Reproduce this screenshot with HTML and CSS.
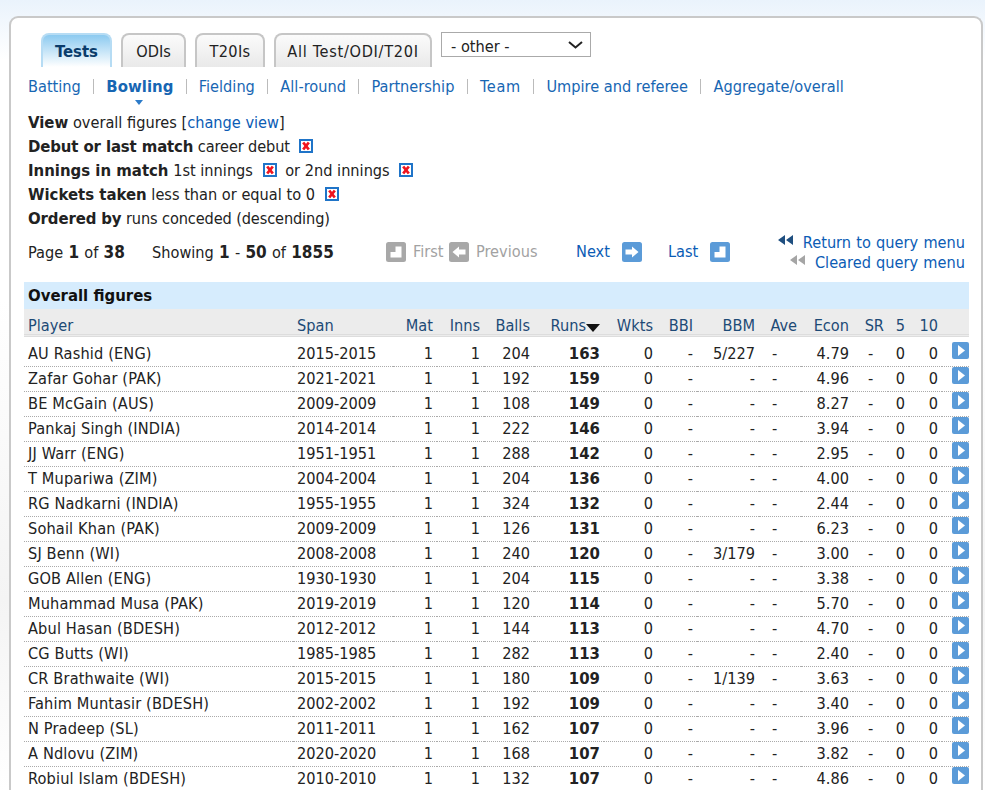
FILE: index.html
```html
<!DOCTYPE html>
<html lang="en">
<head>
<meta charset="utf-8">
<title>Overall figures</title>
<link rel="stylesheet" href="styles.css">
</head>
<body>
<svg class="defs" width="0" height="0" aria-hidden="true">
  <symbol id="i-x" viewBox="0 0 14 14"><rect x="1" y="1" width="12" height="12" fill="#fff" stroke="#1f74c8" stroke-width="2"/><path d="M4.200 3.500l5.600 7M9.800 3.500l-5.600 7" stroke="#f0141e" stroke-width="2.800" fill="none"/></symbol>
  <symbol id="i-first" viewBox="0 0 20 20"><rect width="20" height="20" rx="2.500"/><path d="M4.500 10H9.500V4.500H15.500V15.500H4.500z" fill="#fff"/></symbol>
  <symbol id="i-prev" viewBox="0 0 20 20"><rect width="20" height="20" rx="2.500"/><path d="M3.500 10L10 4.500V7.500h6.500v5H10v3z" fill="#fff"/></symbol>
  <symbol id="i-next" viewBox="0 0 20 20"><rect width="20" height="20" rx="2.500"/><path d="M16.500 10L10 4.500V7.500H3.500v5H10v3z" fill="#fff"/></symbol>
  <symbol id="i-play" viewBox="0 0 17 17"><rect width="17" height="17" rx="2"/><path d="M6 3L13 8.500 6 14z" fill="#fff"/></symbol>
  <symbol id="i-back" viewBox="0 0 15 10"><path d="M7 0v10L0 5zM15 0v10L8 5z"/></symbol>
</svg>
<div class="panel">
  <div class="tabs">
    <a class="tab tab-active">Tests</a>
    <a class="tab tab-odi">ODIs</a>
    <a class="tab tab-t20">T20Is</a>
    <a class="tab tab-all">All Test/ODI/T20I</a>
    <div class="select">
      <span>- other -</span>
      <svg class="chevron" width="15" height="8" viewBox="0 0 15 8"><path d="M1 1l6.500 5.500L14 1" fill="none" stroke="#222" stroke-width="2"/></svg>
    </div>
  </div>
  <nav class="subnav">
    <a>Batting</a><i></i>
    <a class="current">Bowling</a><i></i>
    <a>Fielding</a><i></i>
    <a>All-round</a><i></i>
    <a>Partnership</a><i></i>
    <a class="wide">Team</a><i></i>
    <a>Umpire and referee</a><i></i>
    <a>Aggregate/overall</a>
  </nav>
  <div class="filters">
    <div><b>View</b> overall figures [<a>change view</a>]</div>
    <div class="tight"><b>Debut or last match</b> career debut <svg class="x"><use href="#i-x"/></svg></div>
    <div><b>Innings in match</b> 1st innings <svg class="x"><use href="#i-x"/></svg> or 2nd innings <svg class="x"><use href="#i-x"/></svg></div>
    <div><b>Wickets taken</b> less than or equal to 0 <svg class="x"><use href="#i-x"/></svg></div>
    <div class="tight"><b>Ordered by</b> runs conceded (descending)</div>
  </div>
  <div class="pager">
    <span class="page-of">Page <b>1</b> of <b>38</b></span>
    <span class="showing">Showing <b>1</b> - <b>50</b> of <b>1855</b></span>
    <span class="nav off first"><svg class="btn"><use href="#i-first"/></svg>First</span>
    <span class="nav off prev"><svg class="btn"><use href="#i-prev"/></svg>Previous</span>
    <a class="nav next">Next<svg class="btn"><use href="#i-next"/></svg></a>
    <a class="nav last">Last<svg class="btn"><use href="#i-first"/></svg></a>
    <div class="query">
      <a><svg class="back dark"><use href="#i-back"/></svg>Return to query menu</a>
      <a><svg class="back pale"><use href="#i-back"/></svg>Cleared query menu</a>
    </div>
  </div>
  <div class="caption">Overall figures</div>
  <table class="stats">
    <colgroup>
      <col class="c-player"><col class="c-span"><col class="c-mat"><col class="c-inns"><col class="c-balls"><col class="c-runs"><col class="c-wkts"><col class="c-bbi"><col class="c-bbm"><col class="c-ave"><col class="c-econ"><col class="c-sr"><col class="c-five"><col class="c-ten"><col class="c-go">
    </colgroup>
    <thead>
      <tr><th class="l">Player</th><th class="l">Span</th><th>Mat</th><th>Inns</th><th>Balls</th><th>Runs<span class="sort"></span></th><th>Wkts</th><th>BBI</th><th>BBM</th><th>Ave</th><th>Econ</th><th>SR</th><th>5</th><th>10</th><th></th></tr>
    </thead>
    <tbody>
      <tr><td class="l">AU Rashid (ENG)</td><td class="l">2015-2015</td><td>1</td><td>1</td><td>204</td><td class="b">163</td><td>0</td><td>-</td><td>5/227</td><td class="d">-</td><td>4.79</td><td class="d">-</td><td>0</td><td>0</td><td class="go"><svg class="play"><use href="#i-play"/></svg></td></tr>
      <tr><td class="l">Zafar Gohar (PAK)</td><td class="l">2021-2021</td><td>1</td><td>1</td><td>192</td><td class="b">159</td><td>0</td><td>-</td><td>-</td><td class="d">-</td><td>4.96</td><td class="d">-</td><td>0</td><td>0</td><td class="go"><svg class="play"><use href="#i-play"/></svg></td></tr>
      <tr><td class="l">BE McGain (AUS)</td><td class="l">2009-2009</td><td>1</td><td>1</td><td>108</td><td class="b">149</td><td>0</td><td>-</td><td>-</td><td class="d">-</td><td>8.27</td><td class="d">-</td><td>0</td><td>0</td><td class="go"><svg class="play"><use href="#i-play"/></svg></td></tr>
      <tr><td class="l">Pankaj Singh (INDIA)</td><td class="l">2014-2014</td><td>1</td><td>1</td><td>222</td><td class="b">146</td><td>0</td><td>-</td><td>-</td><td class="d">-</td><td>3.94</td><td class="d">-</td><td>0</td><td>0</td><td class="go"><svg class="play"><use href="#i-play"/></svg></td></tr>
      <tr><td class="l">JJ Warr (ENG)</td><td class="l">1951-1951</td><td>1</td><td>1</td><td>288</td><td class="b">142</td><td>0</td><td>-</td><td>-</td><td class="d">-</td><td>2.95</td><td class="d">-</td><td>0</td><td>0</td><td class="go"><svg class="play"><use href="#i-play"/></svg></td></tr>
      <tr><td class="l">T Mupariwa (ZIM)</td><td class="l">2004-2004</td><td>1</td><td>1</td><td>204</td><td class="b">136</td><td>0</td><td>-</td><td>-</td><td class="d">-</td><td>4.00</td><td class="d">-</td><td>0</td><td>0</td><td class="go"><svg class="play"><use href="#i-play"/></svg></td></tr>
      <tr><td class="l">RG Nadkarni (INDIA)</td><td class="l">1955-1955</td><td>1</td><td>1</td><td>324</td><td class="b">132</td><td>0</td><td>-</td><td>-</td><td class="d">-</td><td>2.44</td><td class="d">-</td><td>0</td><td>0</td><td class="go"><svg class="play"><use href="#i-play"/></svg></td></tr>
      <tr><td class="l">Sohail Khan (PAK)</td><td class="l">2009-2009</td><td>1</td><td>1</td><td>126</td><td class="b">131</td><td>0</td><td>-</td><td>-</td><td class="d">-</td><td>6.23</td><td class="d">-</td><td>0</td><td>0</td><td class="go"><svg class="play"><use href="#i-play"/></svg></td></tr>
      <tr><td class="l">SJ Benn (WI)</td><td class="l">2008-2008</td><td>1</td><td>1</td><td>240</td><td class="b">120</td><td>0</td><td>-</td><td>3/179</td><td class="d">-</td><td>3.00</td><td class="d">-</td><td>0</td><td>0</td><td class="go"><svg class="play"><use href="#i-play"/></svg></td></tr>
      <tr><td class="l">GOB Allen (ENG)</td><td class="l">1930-1930</td><td>1</td><td>1</td><td>204</td><td class="b">115</td><td>0</td><td>-</td><td>-</td><td class="d">-</td><td>3.38</td><td class="d">-</td><td>0</td><td>0</td><td class="go"><svg class="play"><use href="#i-play"/></svg></td></tr>
      <tr><td class="l">Muhammad Musa (PAK)</td><td class="l">2019-2019</td><td>1</td><td>1</td><td>120</td><td class="b">114</td><td>0</td><td>-</td><td>-</td><td class="d">-</td><td>5.70</td><td class="d">-</td><td>0</td><td>0</td><td class="go"><svg class="play"><use href="#i-play"/></svg></td></tr>
      <tr><td class="l">Abul Hasan (BDESH)</td><td class="l">2012-2012</td><td>1</td><td>1</td><td>144</td><td class="b">113</td><td>0</td><td>-</td><td>-</td><td class="d">-</td><td>4.70</td><td class="d">-</td><td>0</td><td>0</td><td class="go"><svg class="play"><use href="#i-play"/></svg></td></tr>
      <tr><td class="l">CG Butts (WI)</td><td class="l">1985-1985</td><td>1</td><td>1</td><td>282</td><td class="b">113</td><td>0</td><td>-</td><td>-</td><td class="d">-</td><td>2.40</td><td class="d">-</td><td>0</td><td>0</td><td class="go"><svg class="play"><use href="#i-play"/></svg></td></tr>
      <tr><td class="l">CR Brathwaite (WI)</td><td class="l">2015-2015</td><td>1</td><td>1</td><td>180</td><td class="b">109</td><td>0</td><td>-</td><td>1/139</td><td class="d">-</td><td>3.63</td><td class="d">-</td><td>0</td><td>0</td><td class="go"><svg class="play"><use href="#i-play"/></svg></td></tr>
      <tr><td class="l">Fahim Muntasir (BDESH)</td><td class="l">2002-2002</td><td>1</td><td>1</td><td>192</td><td class="b">109</td><td>0</td><td>-</td><td>-</td><td class="d">-</td><td>3.40</td><td class="d">-</td><td>0</td><td>0</td><td class="go"><svg class="play"><use href="#i-play"/></svg></td></tr>
      <tr><td class="l">N Pradeep (SL)</td><td class="l">2011-2011</td><td>1</td><td>1</td><td>162</td><td class="b">107</td><td>0</td><td>-</td><td>-</td><td class="d">-</td><td>3.96</td><td class="d">-</td><td>0</td><td>0</td><td class="go"><svg class="play"><use href="#i-play"/></svg></td></tr>
      <tr><td class="l">A Ndlovu (ZIM)</td><td class="l">2020-2020</td><td>1</td><td>1</td><td>168</td><td class="b">107</td><td>0</td><td>-</td><td>-</td><td class="d">-</td><td>3.82</td><td class="d">-</td><td>0</td><td>0</td><td class="go"><svg class="play"><use href="#i-play"/></svg></td></tr>
      <tr><td class="l">Robiul Islam (BDESH)</td><td class="l">2010-2010</td><td>1</td><td>1</td><td>132</td><td class="b">107</td><td>0</td><td>-</td><td>-</td><td class="d">-</td><td>4.86</td><td class="d">-</td><td>0</td><td>0</td><td class="go"><svg class="play"><use href="#i-play"/></svg></td></tr>
    </tbody>
  </table>
</div>
</body>
</html>
```

FILE: styles.css
```css
html, body { height: 790px; overflow: hidden; }
body {
  margin: 0;
  padding: 16px 2px 0 9px;
  box-sizing: border-box;
  font-family: "DejaVu Sans", sans-serif;
  font-stretch: condensed;
  font-size: 16.200px;
  color: #222;
  background: linear-gradient(#eaf3fc, #fff 60px, #fff 300px, #f4f4f4 600px, #fff);
}
a { color: #0b5cb5; }
b, .tab-active, .current, .caption, .stats td.b { font-size: 16.600px; }
.defs { display: block; height: 0; }
.panel {
  height: 774px;
  overflow: hidden;
  box-sizing: border-box;
  padding: 15px 12px 0 13px;
  background: #fff;
  border: 2px solid #c9c9c9;
  border-bottom: 0;
  border-radius: 9px 9px 0 0;
}
.tabs { display: flex; align-items: flex-start; gap: 9px; padding-left: 17px; height: 34px; }
.tab {
  box-sizing: border-box;
  height: 34px;
  padding-top: 8px;
  text-align: center;
  color: #222;
  line-height: 18px;
  border: 2px solid #c6c6c6;
  border-bottom: 0;
  border-radius: 8px 8px 0 0;
  background: linear-gradient(#fbfbfb, #e9e9e9);
}
.tab-active {
  width: 71px;
  color: #0a3c6b;
  font-weight: bold;
  border-color: #b6dcf4;
  background: linear-gradient(#8ccaf0, #fff);
}
.tab-odi { width: 65px; }
.tab-t20 { width: 70px; letter-spacing: .3px; }
.tab-all { width: 158px; letter-spacing: .7px; }
.select {
  box-sizing: border-box;
  width: 150px;
  height: 25px;
  margin-top: -1px;
  padding: 3px 7px 0 9px;
  display: flex;
  align-items: center;
  justify-content: space-between;
  border: 1px solid #aaa;
  background: #fff;
}
.chevron { margin-top: -3px; }
.subnav { display: flex; align-items: center; height: 24px; margin-top: 7px; padding-left: 4px; }
.subnav i { width: 1px; height: 15px; margin: 0 12.250px; background: #bbb; }
.subnav a { color: #1766b3; }
.subnav .wide { letter-spacing: .7px; }
.subnav .current { position: relative; font-weight: bold; }
.subnav .current::after {
  content: "";
  position: absolute;
  left: 29px;
  top: 23px;
  border: 4px solid transparent;
  border-top: 5px solid #2c7bc9;
  border-bottom: 0;
}
.filters { margin-top: 13px; padding-left: 4px; line-height: 24px; }
.filters a { color: #0b5cb5; }
.tight { letter-spacing: -.12px; }
.x { width: 14px; height: 14px; margin: 0 4px 0 5px; vertical-align: -1px; }
.pager { display: flex; align-items: center; box-sizing: border-box; height: 43px; padding: 0 4px 2px; margin-bottom: 8px; word-spacing: .6px; }
.pager b { font-size: 17px; }
.page-of { width: 124px; }
.showing { width: 234px; }
.nav { display: inline-flex; align-items: center; }
.off { color: #a2a2a2; }
.btn { width: 20px; height: 20px; }
.off .btn { fill: #a8a8a8; margin-right: 7px; }
.first { width: 63px; }
.prev { width: 127px; }
.next, .last { color: #0b5cb5; justify-content: space-between; }
.next { width: 66px; margin-right: 26px; }
.last { width: 62px; }
.next .btn, .last .btn { fill: #5b9bd8; }
.query { margin-left: auto; display: flex; flex-direction: column; align-items: flex-end; line-height: 20px; padding-top: 3px; }
.back { width: 15px; height: 10px; margin-right: 10px; vertical-align: 3px; }
.dark { fill: #1f4f80; }
.pale { fill: #a5a5a5; }
.caption {
  height: 27px;
  line-height: 27px;
  padding-left: 4px;
  font-weight: bold;
  color: #111;
  background: #d6ecfd;
}
.stats { width: 945px; border-collapse: collapse; table-layout: fixed; }
.stats th, .stats td { padding: 0 4px; text-align: right; white-space: nowrap; font-weight: normal; }
.stats .l { text-align: left; }
.stats thead tr { background: #ececec; }
.stats thead th { color: #1d4a76; border-bottom: 3px double #ddd; padding-top: 9px; line-height: 16px; }
.stats tbody tr { height: 25px; border-bottom: 1px dotted #aaa; }
.stats tbody tr:first-child { height: 31px; }
.stats tbody td { vertical-align: bottom; line-height: 24px; }
.stats tbody td:first-child { letter-spacing: .15px; }
.stats td.b { font-weight: bold; }
.stats td.d { text-align: left; padding-left: 13px; }
.stats td.d:nth-child(12) { padding-left: 15px; }
.stats td.go { padding: 0 0 7px; line-height: 0; }
.play { display: block; width: 17px; height: 17px; fill: #5b9bd8; margin-left: auto; }
.sort {
  display: inline-block;
  border: 7px solid transparent;
  border-top: 8px solid #111;
  border-bottom: 0;
  vertical-align: -1px;
}
.c-player { width: 269px; }
.c-span { width: 100px; }
.c-mat { width: 44px; }
.c-inns { width: 47px; }
.c-balls { width: 50px; }
.c-runs { width: 70px; }
.c-wkts { width: 53px; }
.c-bbi { width: 40px; }
.c-bbm { width: 62px; }
.c-ave { width: 42px; }
.c-econ { width: 52px; }
.c-sr { width: 35px; }
.c-five { width: 21px; }
.c-ten { width: 33px; }
.c-go { width: 27px; }
```
